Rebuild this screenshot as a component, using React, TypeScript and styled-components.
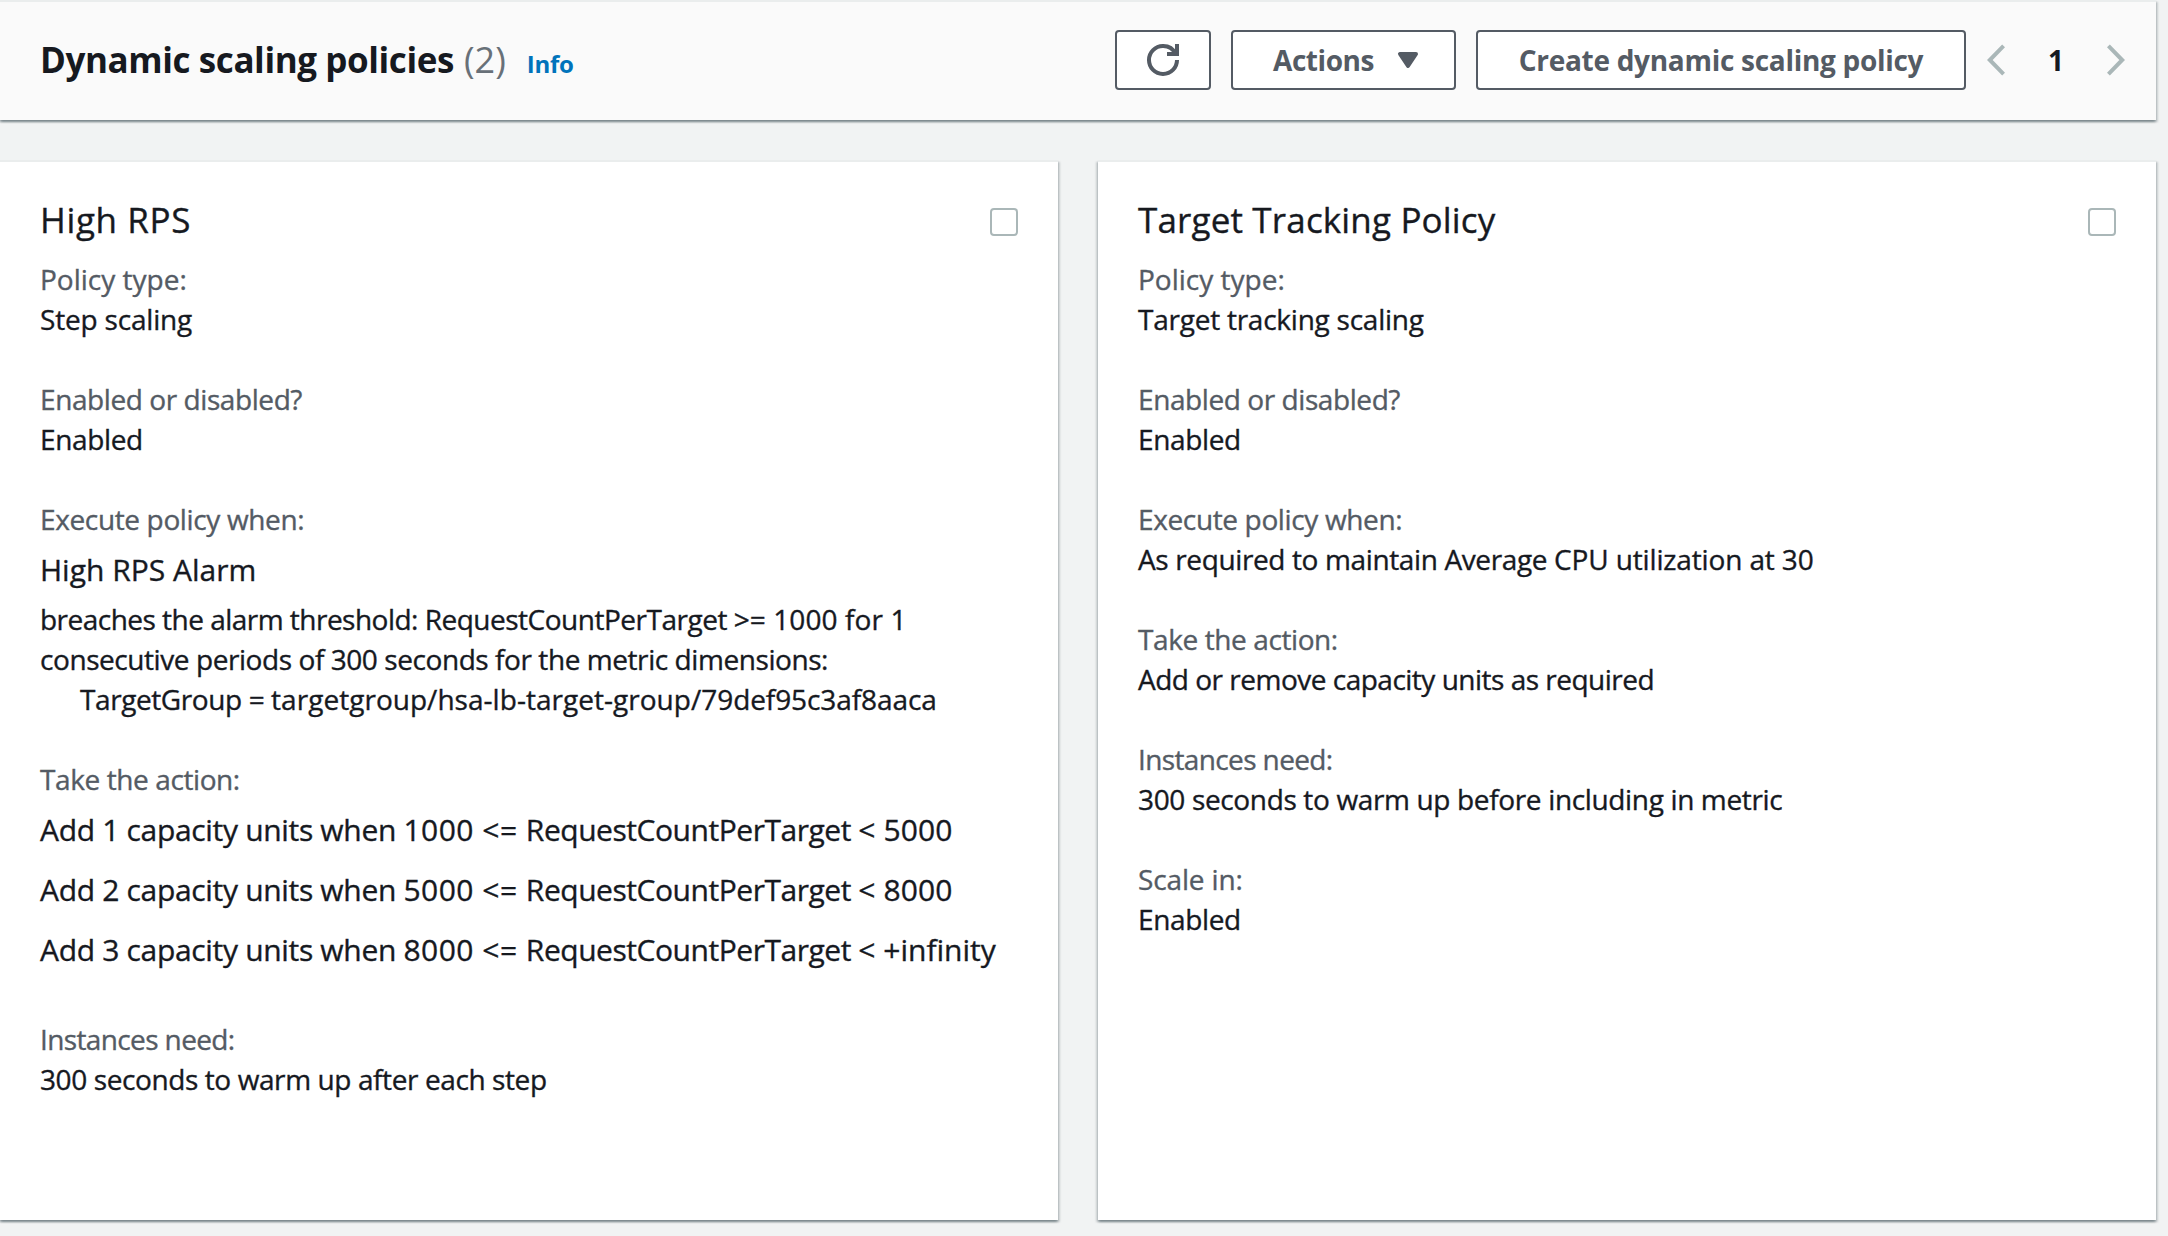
import React from "react";
import styled, { createGlobalStyle } from "styled-components";

const GlobalStyle = createGlobalStyle`
  *, *::before, *::after { box-sizing: border-box; }
  html, body { margin: 0; padding: 0; background: #f1f3f3; }
  body {
    font-family: "Open Sans", "Noto Sans", sans-serif;
    font-size: 28px;
    line-height: 40px;
    color: #16191f;
    overflow: hidden;
  }
`;

type Spaced = { $ls?: number };

const Page = styled.main`
  width: 2156px;
  height: 1236px;
  display: flex;
  flex-direction: column;
`;

const surface = `
  border-top: 2px solid #eaeded;
  box-shadow:
    0 2px 2px 0 rgba(0, 28, 36, 0.3),
    2px 2px 2px 0 rgba(0, 28, 36, 0.15),
    -2px 2px 2px 0 rgba(0, 28, 36, 0.15);
`;

const Header = styled.header`
  ${surface}
  flex: none;
  display: flex;
  align-items: center;
  justify-content: space-between;
  height: 120px;
  padding: 0 31px 0 40px;
  background: #fafafa;
`;

const HeadingGroup = styled.div`
  display: flex;
  align-items: baseline;
  white-space: nowrap;
`;

const Heading = styled.h2`
  margin: 0;
  font-size: 35px;
  line-height: 44px;
  font-weight: 700;
  letter-spacing: -0.41px;
`;

const Count = styled.span`
  margin-left: 10px;
  font-size: 36px;
  line-height: 44px;
  color: #687078;
`;

const InfoLink = styled.a`
  margin-left: 21px;
  font-size: 24px;
  font-weight: 700;
  letter-spacing: -0.24px;
  color: #0073bb;
  text-decoration: none;
`;

const Toolbar = styled.div`
  display: flex;
  align-items: center;
  padding-bottom: 2px;
`;

const Button = styled.button<{ $width: number; $menu?: boolean } & Spaced>`
  display: flex;
  align-items: center;
  justify-content: center;
  gap: 18px;
  width: ${(p) => p.$width}px;
  height: 60px;
  margin: 0 20px 0 0;
  padding: 0 0 0 ${(p) => (p.$menu ? 10 : 0)}px;
  border: 2px solid #545b64;
  border-radius: 4px;
  background: #fff;
  color: #545b64;
  font: inherit;
  font-weight: 700;
  letter-spacing: ${(p) => p.$ls ?? 0}px;
  white-space: nowrap;
`;

const ButtonLabel = styled.span`
  padding-bottom: 1px;
`;

const Pagination = styled.nav`
  display: flex;
  align-items: center;
  justify-content: space-between;
  width: 138px;
  margin-left: 1px;
`;

const PageNumber = styled.span`
  font-weight: 700;
`;

const Cards = styled.div`
  display: grid;
  grid-template-columns: 1058px 1058px;
  column-gap: 40px;
  height: 1060px;
  margin-top: 40px;
`;

const Card = styled.section`
  ${surface}
  padding: 37px 40px;
  background: #fff;
  -webkit-text-stroke: 0.35px;
`;

const CardHeader = styled.div`
  display: flex;
  align-items: center;
  justify-content: space-between;
  height: 44px;
  margin-bottom: 16px;
`;

const CardTitle = styled.h3<Spaced>`
  margin: 0;
  padding-bottom: 2px;
  font-size: 35px;
  line-height: 44px;
  font-weight: 400;
  letter-spacing: ${(p) => p.$ls ?? 0}px;
`;

const Checkbox = styled.span`
  width: 28px;
  height: 28px;
  margin-top: 2px;
  border: 2px solid #aab7b8;
  border-radius: 4px;
  background: #fff;
`;

const Field = styled.div`
  margin-bottom: 40px;
`;

const Line = styled.div<Spaced & { $muted?: boolean; $indent?: boolean }>`
  height: 40px;
  padding-left: ${(p) => (p.$indent ? 40 : 0)}px;
  color: ${(p) => (p.$muted ? "#545b64" : "#16191f")};
  letter-spacing: ${(p) => p.$ls ?? -0.3}px;
  white-space: pre;
`;

const Run = styled.span<Spaced>`
  letter-spacing: ${(p) => p.$ls ?? 0}px;
`;

const LargeLine = styled.div`
  height: 60px;
  padding-top: 1px;
  font-size: 30px;
  line-height: 60px;
  white-space: pre;
`;

const RefreshIcon = () => (
  <svg width="32" height="32" viewBox="0 0 16 16" fill="none" stroke="#545b64" strokeWidth="2">
    <path d="M10 5h5V0" />
    <path d="M15 8a6.957 6.957 0 0 1-7 7 6.957 6.957 0 0 1-7-7 6.957 6.957 0 0 1 7-7 6.87 6.87 0 0 1 6.3 4" />
  </svg>
);

const CaretIcon = () => (
  <svg width="32" height="32" viewBox="0 0 16 16" fill="#545b64" stroke="#545b64" strokeWidth="2" strokeLinejoin="round">
    <path d="M4 5h8l-4 6-4-6z" />
  </svg>
);

const Chevron = ({ dir }: { dir: "left" | "right" }) => (
  <svg width="18" height="32" viewBox="0 0 18 32" fill="none" stroke="#aab7b8" strokeWidth="4">
    <path d={dir === "left" ? "M16.6 1.8 2.8 16l13.8 14.2" : "M1.4 1.8 15.2 16l-13.8 14.2"} />
  </svg>
);

type TextRun = [text: string, ls: number];
type Value = { runs: TextRun[]; indent?: boolean };
type FieldProps = { label: string; ls: number; values?: Value[]; children?: React.ReactNode };

const Runs = ({ runs }: { runs: TextRun[] }) => (
  <>
    {runs.map(([text, ls], i) => (
      <Run key={i} $ls={ls}>{text}</Run>
    ))}
  </>
);

const PolicyField = ({ label, ls, values = [], children }: FieldProps) => (
  <Field>
    <Line $muted $ls={ls}>{label}</Line>
    {children}
    {values.map((v, i) => (
      <Line key={i} $indent={v.indent}><Runs runs={v.runs} /></Line>
    ))}
  </Field>
);

const steps = [
  { units: 1, from: "1000", to: "5000", ls: 0.1 },
  { units: 2, from: "5000", to: "8000", ls: 0.1 },
  { units: 3, from: "8000", to: "+infinity", ls: 0 },
];

const enabled: Value[] = [{ runs: [["Enabled", -0.35]] }];

export default function App() {
  return (
    <>
      <GlobalStyle />
      <Page>
        <Header>
          <HeadingGroup>
            <Heading>Dynamic scaling policies</Heading>
            <Count>(2)</Count>
            <InfoLink>Info</InfoLink>
          </HeadingGroup>
          <Toolbar>
            <Button $width={96} aria-label="Refresh"><RefreshIcon /></Button>
            <Button $width={225} $ls={-0.46} $menu><ButtonLabel>Actions</ButtonLabel><CaretIcon /></Button>
            <Button $width={490} $ls={-0.29}><ButtonLabel>Create dynamic scaling policy</ButtonLabel></Button>
            <Pagination>
              <Chevron dir="left" />
              <PageNumber>1</PageNumber>
              <Chevron dir="right" />
            </Pagination>
          </Toolbar>
        </Header>
        <Cards>
          <Card>
            <CardHeader>
              <CardTitle $ls={0.62}>High RPS</CardTitle>
              <Checkbox role="checkbox" />
            </CardHeader>
            <PolicyField label="Policy type:" ls={0} values={[{ runs: [["Step scaling", -0.18]] }]} />
            <PolicyField label="Enabled or disabled?" ls={-0.42} values={enabled} />
            <PolicyField
              label="Execute policy when:"
              ls={-0.36}
              values={[
                { runs: [["breaches the alarm threshold: ", -0.52], ["RequestCountPerTarget ", -0.49], [">= 1000 for 1", 0.1]] },
                { runs: [["consecutive periods of 300 seconds for the metric dimensions:", -0.43]] },
                { indent: true, runs: [["TargetGroup = ", -0.41], ["targetgroup/hsa-lb-target-group/", 0.03], ["79def95c3af8aaca", -0.08]] },
              ]}
            >
              <LargeLine>High RPS Alarm</LargeLine>
            </PolicyField>
            <PolicyField label="Take the action:" ls={-0.4}>
              {steps.map((s) => (
                <LargeLine key={s.units}>
                  <Runs
                    runs={[
                      [`Add ${s.units} capacity units when `, -0.32],
                      [`${s.from} <= `, 0.48],
                      ["RequestCountPerTarget ", -0.46],
                      [`< ${s.to}`, s.ls],
                    ]}
                  />
                </LargeLine>
              ))}
            </PolicyField>
            <PolicyField label="Instances need:" ls={-0.62} values={[{ runs: [["300 seconds to warm up after each step", -0.4]] }]} />
          </Card>
          <Card>
            <CardHeader>
              <CardTitle $ls={0.16}>Target Tracking Policy</CardTitle>
              <Checkbox role="checkbox" />
            </CardHeader>
            <PolicyField label="Policy type:" ls={0} values={[{ runs: [["Target tracking scaling", -0.24]] }]} />
            <PolicyField label="Enabled or disabled?" ls={-0.42} values={enabled} />
            <PolicyField
              label="Execute policy when:"
              ls={-0.36}
              values={[{ runs: [["As required to maintain Average ", -0.37], ["CPU utilization at 30", -0.14]] }]}
            />
            <PolicyField label="Take the action:" ls={-0.4} values={[{ runs: [["Add or remove capacity units as required", -0.5]] }]} />
            <PolicyField label="Instances need:" ls={-0.62} values={[{ runs: [["300 seconds to warm up before including in metric", -0.35]] }]} />
            <PolicyField label="Scale in:" ls={-0.14} values={enabled} />
          </Card>
        </Cards>
      </Page>
    </>
  );
}
